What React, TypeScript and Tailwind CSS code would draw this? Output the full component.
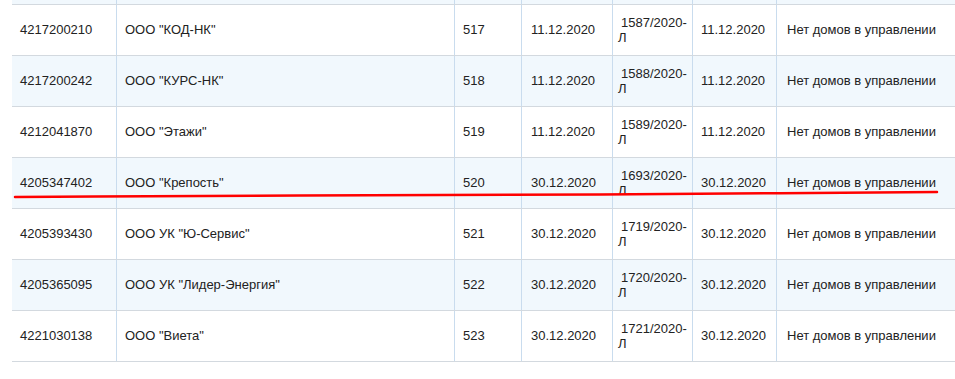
import React from 'react';

type Row = {
    inn: string;
    name: string;
    num: string;
    date: string;
    lic: string;
    licDate: string;
    status: string;
};

const rows: Row[] = [
    { inn: '4217200210', name: 'ООО "КОД-НК"', num: '517', date: '11.12.2020', lic: '1587/2020-', licDate: '11.12.2020', status: 'Нет домов в управлении' },
    { inn: '4217200242', name: 'ООО "КУРС-НК"', num: '518', date: '11.12.2020', lic: '1588/2020-', licDate: '11.12.2020', status: 'Нет домов в управлении' },
    { inn: '4212041870', name: 'ООО "Этажи"', num: '519', date: '11.12.2020', lic: '1589/2020-', licDate: '11.12.2020', status: 'Нет домов в управлении' },
    { inn: '4205347402', name: 'ООО "Крепость"', num: '520', date: '30.12.2020', lic: '1693/2020-', licDate: '30.12.2020', status: 'Нет домов в управлении' },
    { inn: '4205393430', name: 'ООО УК "Ю-Сервис"', num: '521', date: '30.12.2020', lic: '1719/2020-', licDate: '30.12.2020', status: 'Нет домов в управлении' },
    { inn: '4205365095', name: 'ООО УК "Лидер-Энергия"', num: '522', date: '30.12.2020', lic: '1720/2020-', licDate: '30.12.2020', status: 'Нет домов в управлении' },
    { inn: '4221030138', name: 'ООО "Виета"', num: '523', date: '30.12.2020', lic: '1721/2020-', licDate: '30.12.2020', status: 'Нет домов в управлении' },
];

const cell = 'flex items-center border-l border-[#c9dcee]';

const App: React.FC = () => {
    return (
        <div className="relative w-[955px] h-[379px] bg-white overflow-hidden text-[13px] text-[#222] font-['Liberation_Sans',Arial,sans-serif]">
            <div className="ml-[12px]">
                {/* partial row at the top */}
                <div className="flex h-[5px] bg-[#f1f8fd] border-b border-[#d3d9df]">
                    <div className="w-[104px]" />
                    <div className={`${cell} w-[338px]`} />
                    <div className={`${cell} w-[67px]`} />
                    <div className={`${cell} w-[91px]`} />
                    <div className={`${cell} w-[80px]`} />
                    <div className={`${cell} w-[84px]`} />
                    <div className={`${cell} flex-1`} />
                </div>

                {rows.map((r, i) => (
                    <div
                        key={r.inn}
                        className={`flex h-[51px] border-b border-[#d3d9df] ${i % 2 === 1 ? 'bg-[#f1f8fd]' : 'bg-white'}`}
                    >
                        <div className="flex items-center w-[104px] pl-2">{r.inn}</div>
                        <div className={`${cell} w-[338px] pl-2`}>{r.name}</div>
                        <div className={`${cell} w-[67px] pl-2`}>{r.num}</div>
                        <div className={`${cell} w-[91px] pl-[9px]`}>{r.date}</div>
                        <div className={`${cell} w-[80px] pl-[5px]`}>
                            <div className="leading-[15px]">
                                <div className="pl-[3px]">{r.lic}</div>
                                <div>Л</div>
                            </div>
                        </div>
                        <div className={`${cell} w-[84px] pl-2`}>{r.licDate}</div>
                        <div className={`${cell} flex-1 pl-[10px] whitespace-nowrap`}>{r.status}</div>
                    </div>
                ))}
            </div>

            {/* hand-drawn red underline */}
            <svg className="absolute left-0 top-0 pointer-events-none" width="955" height="379">
                <path
                    d="M15 197 L95 196.6 L300 195.6 L600 194.5 L780 193.2 L937 192"
                    fill="none"
                    stroke="#ff0000"
                    strokeWidth="2.5"
                    strokeLinecap="round"
                    strokeLinejoin="round"
                />
            </svg>
        </div>
    );
};

export default App;
